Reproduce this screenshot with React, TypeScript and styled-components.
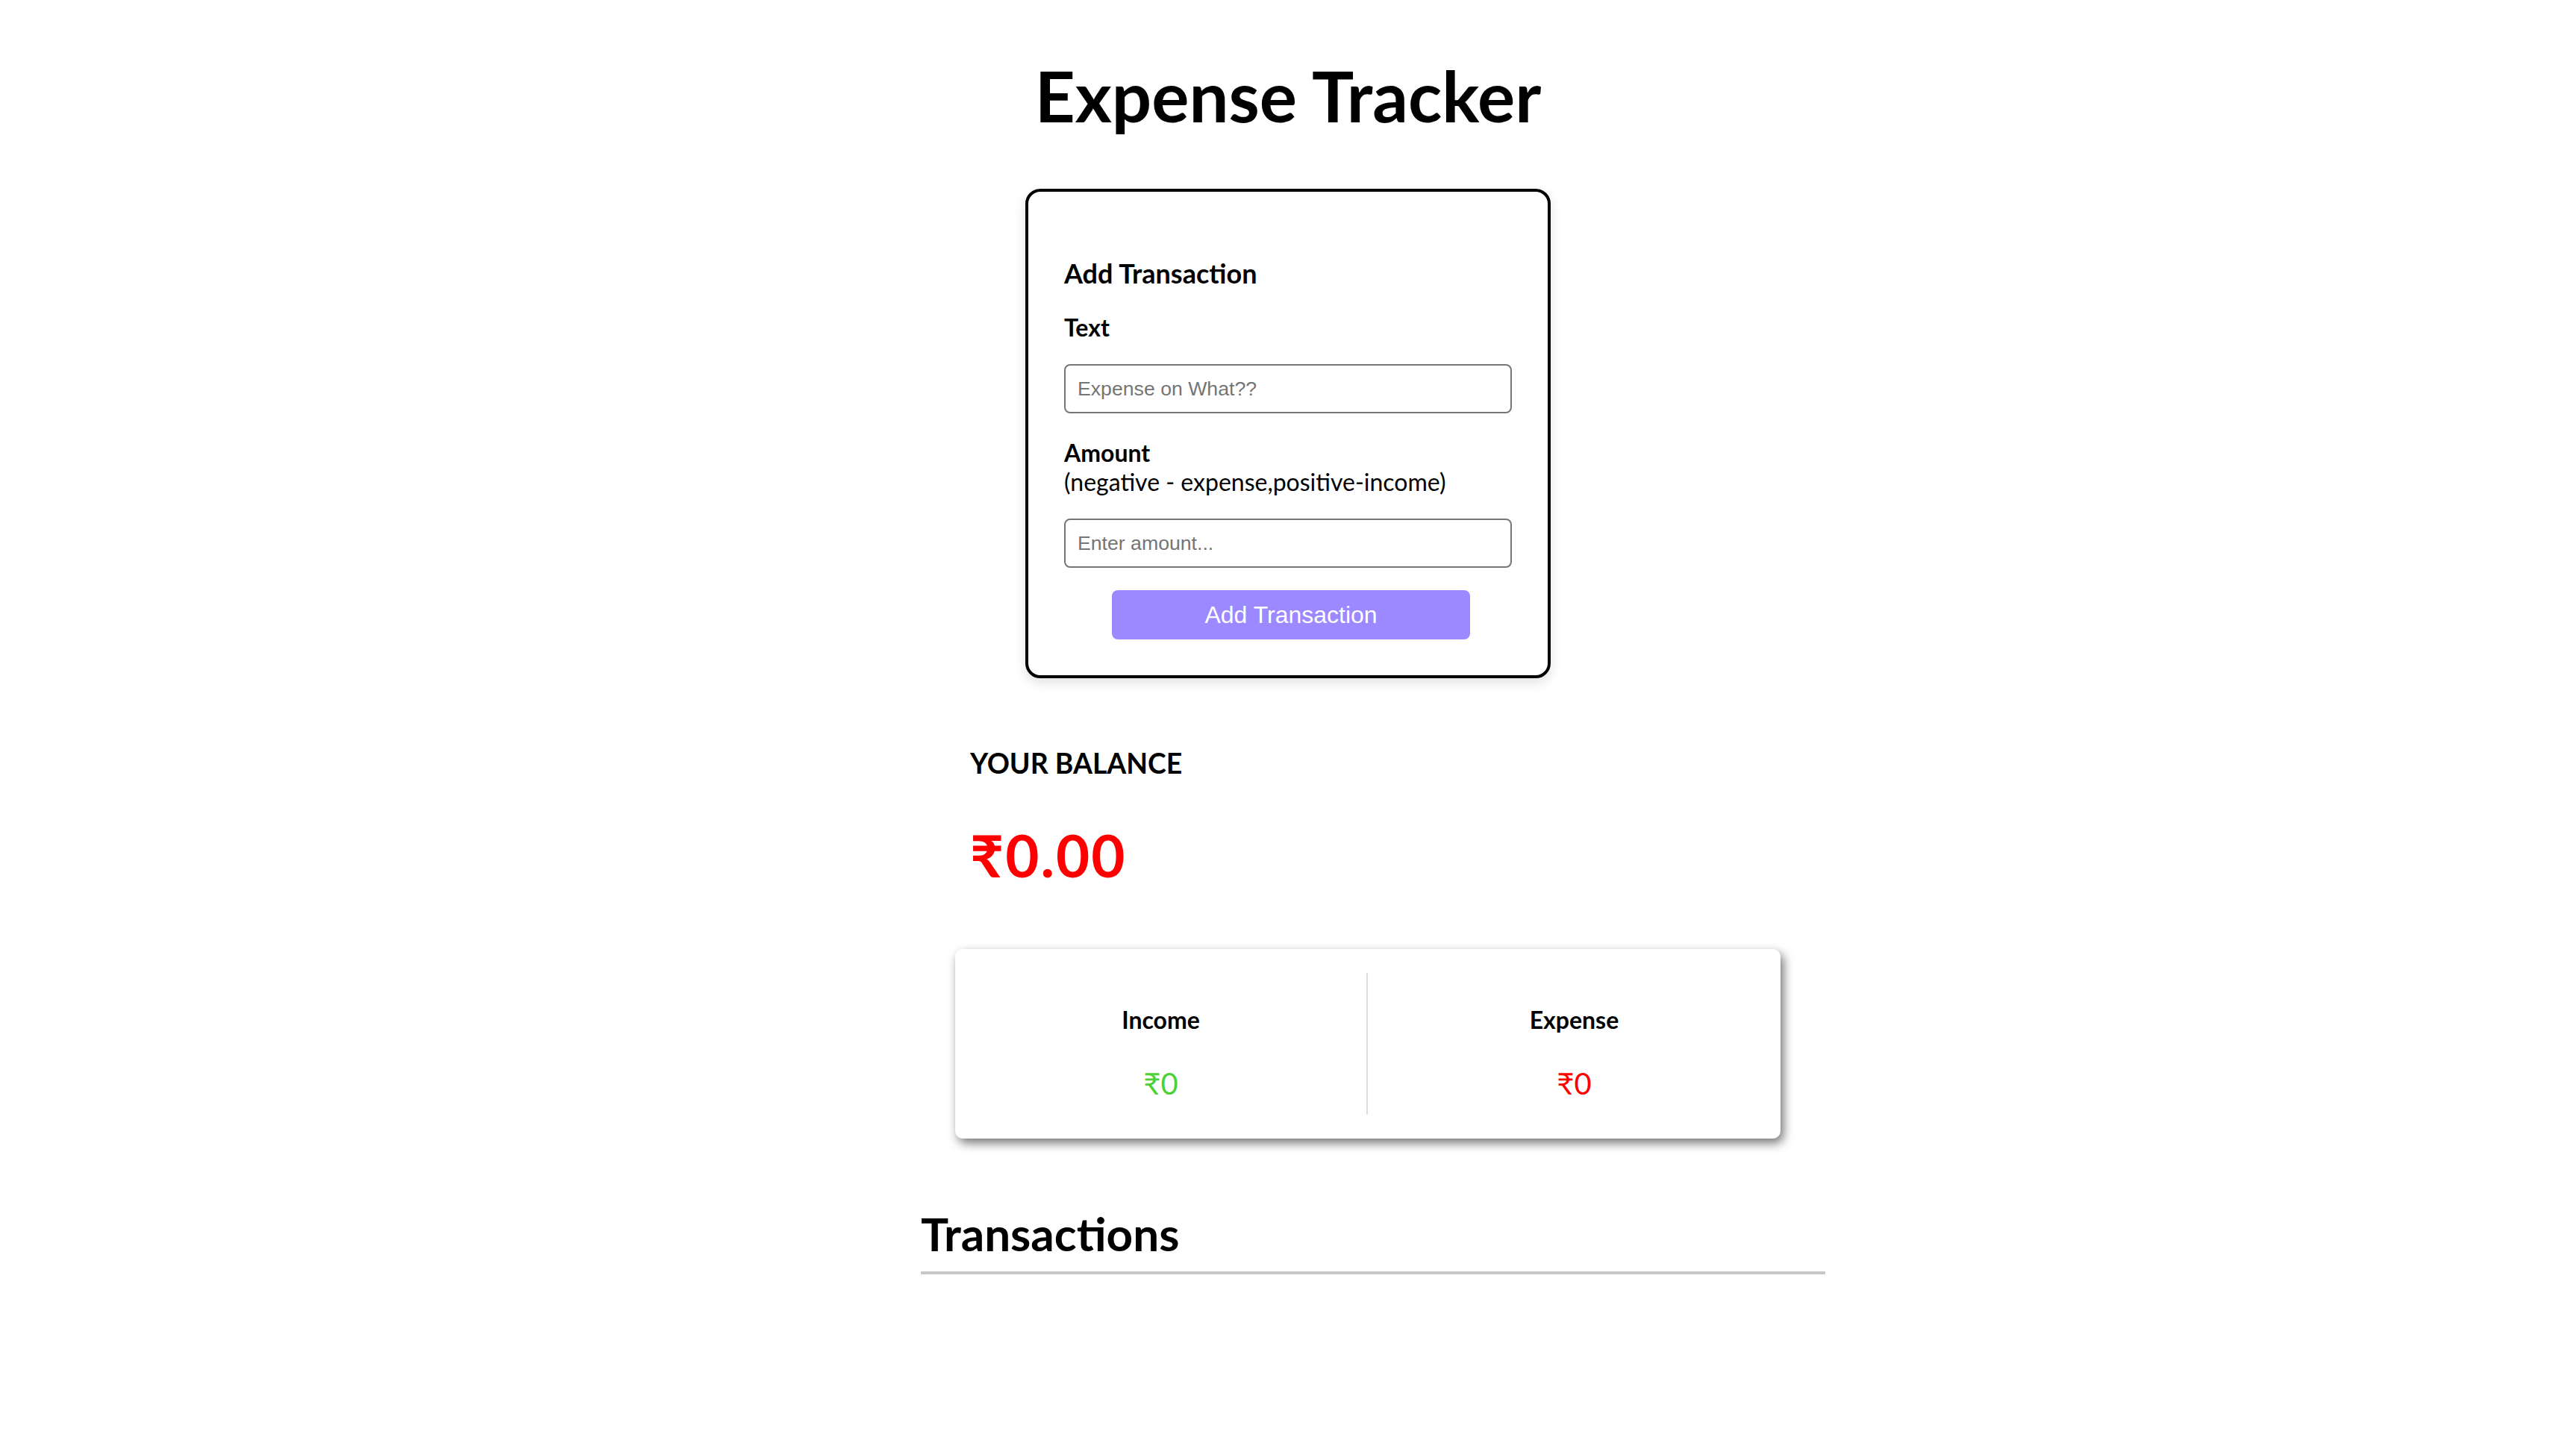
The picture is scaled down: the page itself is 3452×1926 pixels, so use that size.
import React from 'react'
import styled, { createGlobalStyle } from 'styled-components'

const GlobalStyle = createGlobalStyle`
  * {
    box-sizing: border-box;
  }
  html {
    zoom: 2;
  }
  body {
    margin: 8px;
    background: #fff;
    color: #000;
    font-family: Lato, "Noto Sans", "DejaVu Sans", sans-serif;
  }
`

const Title = styled.h1`
  margin: 28px 0 0;
  text-align: center;
  font-size: 47px;
  font-weight: 700;
  line-height: 1.2;
`

const Card = styled.div`
  width: 352px;
  margin: 34px auto 0;
  padding: 24px;
  border: 2px solid #000;
  border-radius: 10px;
  box-shadow: 0 3px 8px rgba(0, 0, 0, 0.12);
  display: flex;
  flex-direction: column;
`

const CardHeading = styled.h3`
  margin: 20px 0 0;
  font-size: 18px;
  font-weight: 700;
  line-height: 1.2;
`

const Label = styled.label<{ $gap: number }>`
  display: block;
  margin-top: ${(p) => p.$gap}px;
  font-size: 16px;
  font-weight: 700;
  line-height: 1.2;
`

const Hint = styled.span`
  display: block;
  font-weight: 400;
`

const Input = styled.input<{ $gap: number }>`
  display: block;
  width: 100%;
  height: 33px;
  margin-top: ${(p) => p.$gap}px;
  padding: 0 8px;
  border: 1px solid #767676;
  border-radius: 4px;
  font-family: "Liberation Sans", Arial, sans-serif;
  font-size: 13.33px;
  color: #000;

  &::placeholder {
    color: #757575;
  }
`

const SubmitButton = styled.button`
  align-self: flex-start;
  width: 240px;
  height: 33px;
  margin: 15px 0 0 32px;
  border: none;
  border-radius: 4px;
  background: #9c88ff;
  color: #fff;
  font-family: "Liberation Sans", Arial, sans-serif;
  font-size: 16px;
  cursor: pointer;
`

const Column = styled.div`
  width: 606px;
  margin-left: calc(50% - 246px);
`

const BalanceLabel = styled.h4`
  margin: 46px 0 0;
  padding-left: 33px;
  font-size: 18.7px;
  font-weight: 700;
  line-height: 1.2;
`

const BalanceValue = styled.h1`
  margin: 27px 0 0;
  padding-left: 33px;
  font-size: 39px;
  font-weight: 700;
  letter-spacing: 1px;
  line-height: 1.2;
  color: #ff0000;
`

const Summary = styled.div`
  display: grid;
  grid-template-columns: 1fr 1fr;
  width: 553px;
  height: 127px;
  margin: 39px 0 0 23px;
  padding: 16px 0;
  background: #fff;
  border-radius: 5px;
  box-shadow: 2px 3px 7px rgba(0, 0, 0, 0.55);
`

const Stat = styled.div<{ $divider?: boolean }>`
  padding-top: 22px;
  text-align: center;
  border-right: ${(p) => (p.$divider ? '1px solid #dddddd' : 'none')};
`

const StatLabel = styled.h4`
  margin: 0;
  font-size: 16px;
  font-weight: 700;
  line-height: 1.2;
`

const StatValue = styled.p<{ $color: string }>`
  margin: 21px 0 0;
  font-size: 20px;
  line-height: 1.2;
  color: ${(p) => p.$color};
`

const SectionHeading = styled.h3`
  margin: 45px 0 0;
  padding-bottom: 7px;
  border-bottom: 2px solid #c8c8c8;
  font-size: 31px;
  font-weight: 700;
  line-height: 1.2;
`

const List = styled.ul`
  margin: 10px 0 40px;
  padding: 0;
  list-style: none;
`

export default function App() {
  return (
    <>
      <GlobalStyle />
      <Title>Expense Tracker</Title>
      <Card>
        <CardHeading>Add Transaction</CardHeading>
        <Label $gap={16}>Text</Label>
        <Input $gap={15} type="text" placeholder="Expense on What??" />
        <Label $gap={17}>
          Amount
          <Hint>(negative - expense,positive-income)</Hint>
        </Label>
        <Input $gap={15} type="number" placeholder="Enter amount..." />
        <SubmitButton>Add Transaction</SubmitButton>
      </Card>
      <Column>
        <BalanceLabel>YOUR BALANCE</BalanceLabel>
        <BalanceValue>₹0.00</BalanceValue>
        <Summary>
          <Stat $divider>
            <StatLabel>Income</StatLabel>
            <StatValue $color="#4cd137">₹0</StatValue>
          </Stat>
          <Stat>
            <StatLabel>Expense</StatLabel>
            <StatValue $color="#ff0000">₹0</StatValue>
          </Stat>
        </Summary>
        <SectionHeading>Transactions</SectionHeading>
        <List />
      </Column>
    </>
  )
}
